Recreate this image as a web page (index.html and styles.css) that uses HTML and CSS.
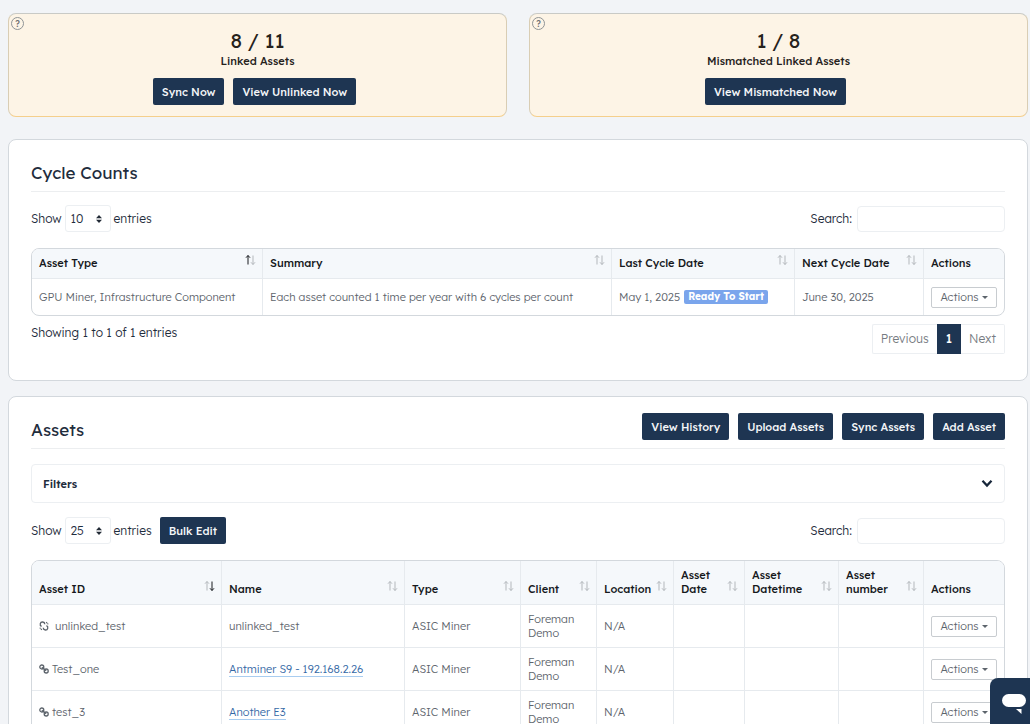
FILE: index.html
```html
<!DOCTYPE html>
<html lang="en">
<head>
    <meta charset="UTF-8">
    <meta name="viewport" content="width=device-width, initial-scale=1.0">
    <title>Assets</title>
    <link rel="stylesheet" href="styles.css">
</head>
<body>
    <svg class="sprite" aria-hidden="true">
        <symbol id="sort" viewBox="0 0 11 12">
            <path class="up" d="M3 10.5V1.5M1 3.7L3 1.5L5 3.7"/>
            <path class="down" d="M8 1.5V10.5M6 8.3L8 10.5L10 8.3"/>
        </symbol>
        <symbol id="link" viewBox="0 0 10 10">
            <circle cx="2.8" cy="3" r="2"/>
            <circle cx="7.2" cy="7" r="2"/>
            <path d="M2.8 3.4L7.2 6.6"/>
        </symbol>
        <symbol id="unlink" viewBox="0 0 10 10">
            <path d="M5.8 3.2A2.3 2.3 0 1 0 2.6 5.4M4.2 6.8A2.3 2.3 0 1 0 7.4 4.6M8 1.2L7.2 2.2M9.3 2.6L8.3 3M0.7 7.4L1.7 7M2 8.8L2.8 7.8"/>
        </symbol>
    </svg>

    <main class="page">
        <div class="summary">
            <section class="summary-card">
                <button type="button" class="help" aria-label="Help">?</button>
                <div class="summary-value">8 / 11</div>
                <div class="summary-label">Linked Assets</div>
                <div class="summary-actions">
                    <button type="button" class="btn">Sync Now</button>
                    <button type="button" class="btn">View Unlinked Now</button>
                </div>
            </section>
            <section class="summary-card">
                <button type="button" class="help" aria-label="Help">?</button>
                <div class="summary-value">1 / 8</div>
                <div class="summary-label">Mismatched Linked Assets</div>
                <div class="summary-actions">
                    <button type="button" class="btn">View Mismatched Now</button>
                </div>
            </section>
        </div>

        <section class="panel">
            <div class="panel-header">
                <h2>Cycle Counts</h2>
            </div>
            <div class="controls">
                <label class="length">Show
                    <select><option>10</option><option>25</option><option>50</option></select>
                    entries</label>
                <label class="search">Search: <input type="search"></label>
            </div>
            <table class="table cycle-table">
                <colgroup>
                    <col class="w-cycle-type"><col><col class="w-last"><col class="w-next"><col class="w-actions">
                </colgroup>
                <thead>
                    <tr>
                        <th><div class="th asc">Asset Type <svg class="sort"><use href="#sort"/></svg></div></th>
                        <th><div class="th">Summary <svg class="sort"><use href="#sort"/></svg></div></th>
                        <th><div class="th">Last Cycle Date <svg class="sort"><use href="#sort"/></svg></div></th>
                        <th><div class="th">Next Cycle Date <svg class="sort"><use href="#sort"/></svg></div></th>
                        <th>Actions</th>
                    </tr>
                </thead>
                <tbody>
                    <tr>
                        <td>GPU Miner, Infrastructure Component</td>
                        <td>Each asset counted 1 time per year with 6 cycles per count</td>
                        <td><div class="cycle-date">May 1, 2025 <span class="badge">Ready To Start</span></div></td>
                        <td>June 30, 2025</td>
                        <td><button type="button" class="btn-actions">Actions</button></td>
                    </tr>
                </tbody>
            </table>
            <div class="table-footer">
                <div class="info">Showing 1 to 1 of 1 entries</div>
                <nav class="pagination" aria-label="Pages">
                    <button type="button">Previous</button>
                    <button type="button" class="active">1</button>
                    <button type="button">Next</button>
                </nav>
            </div>
        </section>

        <section class="panel">
            <div class="panel-header">
                <h2>Assets</h2>
                <div class="panel-actions">
                    <button type="button" class="btn">View History</button>
                    <button type="button" class="btn">Upload Assets</button>
                    <button type="button" class="btn">Sync Assets</button>
                    <button type="button" class="btn">Add Asset</button>
                </div>
            </div>
            <button type="button" class="filters">
                Filters
                <svg class="chevron" viewBox="0 0 10 8"><path d="M1 1.5L5 5.8L9 1.5"/></svg>
            </button>
            <div class="controls">
                <div class="controls-left">
                    <label class="length">Show
                        <select><option>25</option><option>50</option><option>100</option></select>
                        entries</label>
                    <button type="button" class="btn">Bulk Edit</button>
                </div>
                <label class="search">Search: <input type="search"></label>
            </div>
            <table class="table">
                <colgroup>
                    <col><col class="w-name"><col class="w-type"><col class="w-client"><col class="w-location"><col class="w-date"><col class="w-datetime"><col class="w-number"><col class="w-actions">
                </colgroup>
                <thead>
                    <tr>
                        <th><div class="th desc">Asset ID <svg class="sort"><use href="#sort"/></svg></div></th>
                        <th><div class="th">Name <svg class="sort"><use href="#sort"/></svg></div></th>
                        <th><div class="th">Type <svg class="sort"><use href="#sort"/></svg></div></th>
                        <th><div class="th">Client <svg class="sort"><use href="#sort"/></svg></div></th>
                        <th><div class="th">Location <svg class="sort"><use href="#sort"/></svg></div></th>
                        <th><div class="th">Asset<br>Date <svg class="sort"><use href="#sort"/></svg></div></th>
                        <th><div class="th">Asset<br>Datetime <svg class="sort"><use href="#sort"/></svg></div></th>
                        <th><div class="th">Asset<br>number <svg class="sort"><use href="#sort"/></svg></div></th>
                        <th>Actions</th>
                    </tr>
                </thead>
                <tbody>
                    <tr>
                        <td><div class="asset-id unlinked"><svg class="icon"><use href="#unlink"/></svg>unlinked_test</div></td>
                        <td>unlinked_test</td>
                        <td>ASIC Miner</td>
                        <td>Foreman Demo</td>
                        <td>N/A</td>
                        <td></td>
                        <td></td>
                        <td></td>
                        <td><button type="button" class="btn-actions">Actions</button></td>
                    </tr>
                    <tr>
                        <td><div class="asset-id"><svg class="icon"><use href="#link"/></svg>Test_one</div></td>
                        <td><a href="#">Antminer S9 - 192.168.2.26</a></td>
                        <td>ASIC Miner</td>
                        <td>Foreman Demo</td>
                        <td>N/A</td>
                        <td></td>
                        <td></td>
                        <td></td>
                        <td><button type="button" class="btn-actions">Actions</button></td>
                    </tr>
                    <tr>
                        <td><div class="asset-id"><svg class="icon"><use href="#link"/></svg>test_3</div></td>
                        <td><a href="#">Another E3</a></td>
                        <td>ASIC Miner</td>
                        <td>Foreman Demo</td>
                        <td>N/A</td>
                        <td></td>
                        <td></td>
                        <td></td>
                        <td><button type="button" class="btn-actions">Actions</button></td>
                    </tr>
                </tbody>
            </table>
        </section>
    </main>

    <button type="button" class="chat" aria-label="Open chat">
        <svg viewBox="0 0 24 20"><rect width="24" height="13" rx="6.5"/><path d="M14 15H19.5V20Z"/></svg>
    </button>
</body>
</html>
```

FILE: styles.css
```css
* {
    box-sizing: border-box;
    margin: 0;
    padding: 0;
}

body {
    font-family: "Lexend", "Inter", sans-serif;
    font-size: 12px;
    font-weight: 300;
    line-height: 18px;
    color: #1f2d3d;
    background-color: #f2f4f7;
}

button, input, select {
    font: inherit;
    color: inherit;
}

button {
    cursor: pointer;
}

.sprite {
    display: block;
    width: 0;
    height: 0;
}

.page {
    height: 100vh;
    padding: 13px 2px 0 8px;
    overflow-y: auto;
    scrollbar-width: none;
}

/* summary cards */
.summary {
    display: grid;
    grid-template-columns: 1fr 1fr;
    gap: 22px;
    margin-bottom: 22px;
}

.summary-card {
    position: relative;
    padding: 13px 16px 11px;
    text-align: center;
    color: #26221c;
    background-color: #fdf4e6;
    border: 1px solid #d9cdb4;
    border-top-color: #c9cac6;
    border-bottom-color: #f5cf8c;
    border-radius: 8px;
}

.help {
    position: absolute;
    top: 3px;
    left: 2px;
    width: 13px;
    height: 13px;
    font-size: 9px;
    font-weight: 500;
    line-height: 11px;
    color: #6d6f70;
    background: none;
    border: 1px solid #8f9496;
    border-radius: 50%;
}

.summary-value {
    font-size: 20px;
    font-weight: 400;
    line-height: 28px;
}

.summary-label {
    font-size: 11px;
    font-weight: 500;
    line-height: 12px;
}

.summary-actions {
    display: flex;
    justify-content: center;
    gap: 9px;
    margin-top: 11px;
    padding-right: 6px;
}

.btn {
    height: 27px;
    padding: 0 9px;
    font-size: 11px;
    font-weight: 500;
    color: #f4f6f8;
    white-space: nowrap;
    background-color: #1e3552;
    border: none;
    border-radius: 2px;
}

/* panels */
.panel {
    margin-bottom: 15px;
    padding: 16px 22px 26px;
    background-color: #fff;
    border: 1px solid #d3d8dd;
    border-radius: 8px;
}

.panel-header {
    display: flex;
    justify-content: space-between;
    align-items: flex-end;
    height: 36px;
    padding-bottom: 8px;
    border-bottom: 1px solid #eceef0;
}

h2 {
    font-size: 17px;
    font-weight: 400;
    line-height: 20px;
}

.panel-actions {
    display: flex;
    gap: 9px;
}

.filters {
    display: flex;
    justify-content: space-between;
    align-items: center;
    width: 100%;
    height: 39px;
    margin: 15px 0 14px;
    padding: 0 11px;
    font-size: 11px;
    font-weight: 600;
    background-color: #fff;
    border: 1px solid #eceff2;
    border-radius: 4px;
}

.chevron {
    width: 12px;
    height: 9px;
    fill: none;
    stroke: #16263a;
    stroke-width: 2;
}

.controls {
    display: flex;
    justify-content: space-between;
    height: 27px;
    margin: 13px 0 16px;
}

.controls-left {
    display: flex;
    gap: 8px;
}

.length, .search {
    display: flex;
    align-items: center;
    gap: 3px;
}

.search {
    gap: 5px;
}

.length select {
    width: 46px;
    height: 27px;
    padding-left: 5px;
    appearance: none;
    background: #fff url("data:image/svg+xml,%3Csvg xmlns='http://www.w3.org/2000/svg' viewBox='0 0 6 8'%3E%3Cpath fill='%23222b36' d='M0 3.2L3 0L6 3.2ZM0 4.8L3 8L6 4.8Z'/%3E%3C/svg%3E") no-repeat right 8px center / 6px 8px;
    border: 1px solid #eceff2;
    border-radius: 3px;
}

.search input {
    width: 148px;
    height: 26px;
    padding: 0 8px;
    background-color: #fff;
    border: 1px solid #eceff2;
    border-radius: 4px;
}

/* tables */
.table {
    width: 100%;
    table-layout: fixed;
    border-collapse: separate;
    border-spacing: 0;
    border: 1px solid #d3d8dd;
    border-radius: 8px;
    overflow: hidden;
    font-size: 11px;
    line-height: 14px;
}

.w-cycle-type { width: 231px; }
.w-last { width: 183px; }
.w-next { width: 129px; }
.w-name { width: 183px; }
.w-type { width: 116px; }
.w-client { width: 76px; }
.w-location { width: 77px; }
.w-date { width: 71px; }
.w-datetime { width: 94px; }
.w-number { width: 85px; }
.w-actions { width: 80px; }

th {
    padding: 7px 7px 8px;
    font-weight: 500;
    text-align: left;
    vertical-align: bottom;
    color: #16191d;
    background-color: #f5f8fb;
    border-right: 1px solid #e6eaee;
}

.th {
    position: relative;
    white-space: nowrap;
}

td {
    height: 43px;
    padding: 7px;
    vertical-align: middle;
    color: #5d646c;
    border-top: 1px solid #e6eaee;
    border-right: 1px solid #e6eaee;
}

.cycle-table td {
    height: 37px;
    padding-top: 0;
    padding-bottom: 0;
}

th:last-child, td:last-child {
    border-right: none;
}

td a {
    color: #3468a5;
    text-decoration: none;
    border-bottom: 1px solid #a9cdf0;
}

.sort {
    --up: #b3b7bb;
    --down: #b3b7bb;
    position: absolute;
    right: -1px;
    bottom: 4px;
    width: 11px;
    height: 12px;
    fill: none;
    stroke-width: 1;
}

.up {
    stroke: var(--up);
}

.down {
    stroke: var(--down);
}

.asc .sort {
    --up: #16191d;
}

.desc .sort {
    --down: #16191d;
}

.cycle-date {
    display: flex;
    align-items: center;
    gap: 4px;
    white-space: nowrap;
}

.badge {
    padding: 0 4px;
    font-size: 10px;
    font-weight: 700;
    color: #fff;
    background-color: #7aa5ec;
    border-radius: 2px;
}

.btn-actions {
    display: flex;
    align-items: center;
    justify-content: center;
    gap: 3px;
    width: 66px;
    height: 21px;
    background-color: #fff;
    border: 1px solid #c8ccd0;
    border-radius: 2px;
}

.btn-actions::after {
    content: "";
    border: 3px solid transparent;
    border-top-color: currentColor;
    border-bottom: none;
}

.asset-id {
    display: flex;
    align-items: center;
    gap: 3px;
}

.asset-id.unlinked {
    gap: 6px;
}

.icon {
    width: 10px;
    height: 10px;
    fill: none;
    stroke: #5d646c;
    stroke-width: 1.3;
}

.table-footer {
    display: flex;
    justify-content: space-between;
    align-items: flex-start;
    margin-top: 8px;
}

.pagination {
    display: flex;
}

.pagination button {
    height: 30px;
    padding: 0 8px;
    color: #777c82;
    background-color: #fff;
    border: 1px solid #eceff2;
}

.pagination button:first-child {
    border-right: none;
    border-radius: 2px 0 0 2px;
}

.pagination button:last-child {
    border-left: none;
    border-radius: 0 2px 2px 0;
}

.pagination .active {
    font-weight: 500;
    color: #fff;
    background-color: #1e3552;
    border-color: #1e3552;
}

.chat {
    position: fixed;
    right: 0;
    bottom: 0;
    display: flex;
    width: 40px;
    height: 46px;
    padding: 16px 4px 0 12px;
    background-color: #1e3552;
    border: none;
    border-radius: 8px 0 0 0;
}

.chat svg {
    width: 24px;
    height: 20px;
    fill: #fff;
}
```
